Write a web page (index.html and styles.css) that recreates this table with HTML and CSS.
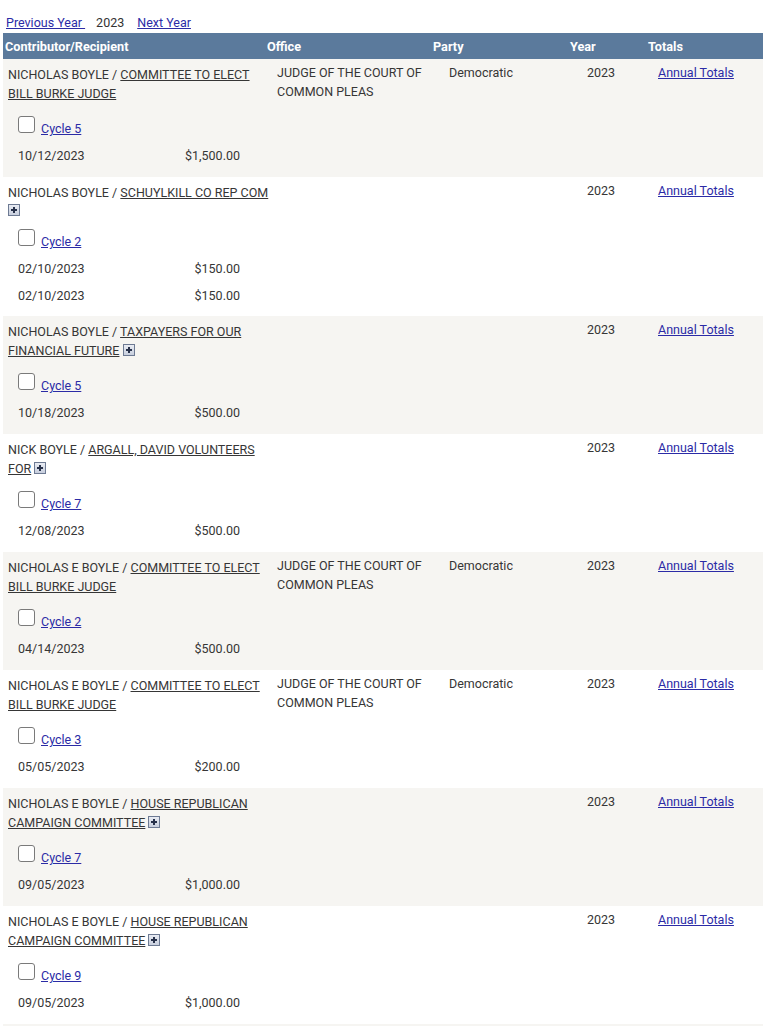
FILE: index.html
```html
<!DOCTYPE html>
<html>
<head>
<meta charset="utf-8">
<link rel="stylesheet" href="styles.css">
</head>
<body>
<div class="nav">
  <a href="#" class="nav-link">Previous Year&nbsp;</a>
  <span class="nav-year">2023</span>
  <a href="#" class="nav-link">Next Year</a>
</div>
<table class="results">
  <colgroup>
    <col class="c-contrib"><col class="c-office"><col class="c-party"><col class="c-year"><col class="c-totals">
  </colgroup>
  <thead>
    <tr>
      <th>Contributor/Recipient</th>
      <th>Office</th>
      <th>Party</th>
      <th>Year</th>
      <th>Totals</th>
    </tr>
  </thead>
  <tbody>
    <tr class="alt">
      <td class="contrib">
        <div class="who">NICHOLAS BOYLE / <a href="#" class="recip">COMMITTEE TO ELECT BILL BURKE JUDGE</a></div>
        <div class="cycle"><input type="checkbox" class="chk"><a href="#" class="cyc">Cycle 5</a></div>
        <div class="gift"><span>10/12/2023</span><span>$1,500.00</span></div>
      </td>
      <td class="office">JUDGE OF THE COURT OF COMMON PLEAS</td>
      <td class="party">Democratic</td>
      <td class="year">2023</td>
      <td class="totals"><a href="#">Annual Totals</a></td>
    </tr>
    <tr>
      <td class="contrib">
        <div class="who">NICHOLAS BOYLE / <a href="#" class="recip">SCHUYLKILL CO REP COM</a></div>
        <div class="plus-line"><span class="plus"></span></div>
        <div class="cycle"><input type="checkbox" class="chk"><a href="#" class="cyc">Cycle 2</a></div>
        <div class="gift"><span>02/10/2023</span><span>$150.00</span></div>
        <div class="gift"><span>02/10/2023</span><span>$150.00</span></div>
      </td>
      <td class="office"></td>
      <td class="party"></td>
      <td class="year">2023</td>
      <td class="totals"><a href="#">Annual Totals</a></td>
    </tr>
    <tr class="alt">
      <td class="contrib">
        <div class="who">NICHOLAS BOYLE / <a href="#" class="recip">TAXPAYERS FOR OUR FINANCIAL FUTURE</a> <span class="plus"></span></div>
        <div class="cycle"><input type="checkbox" class="chk"><a href="#" class="cyc">Cycle 5</a></div>
        <div class="gift"><span>10/18/2023</span><span>$500.00</span></div>
      </td>
      <td class="office"></td>
      <td class="party"></td>
      <td class="year">2023</td>
      <td class="totals"><a href="#">Annual Totals</a></td>
    </tr>
    <tr>
      <td class="contrib">
        <div class="who">NICK BOYLE / <a href="#" class="recip">ARGALL, DAVID VOLUNTEERS FOR</a> <span class="plus"></span></div>
        <div class="cycle"><input type="checkbox" class="chk"><a href="#" class="cyc">Cycle 7</a></div>
        <div class="gift"><span>12/08/2023</span><span>$500.00</span></div>
      </td>
      <td class="office"></td>
      <td class="party"></td>
      <td class="year">2023</td>
      <td class="totals"><a href="#">Annual Totals</a></td>
    </tr>
    <tr class="alt">
      <td class="contrib">
        <div class="who">NICHOLAS E BOYLE / <a href="#" class="recip">COMMITTEE TO ELECT BILL BURKE JUDGE</a></div>
        <div class="cycle"><input type="checkbox" class="chk"><a href="#" class="cyc">Cycle 2</a></div>
        <div class="gift"><span>04/14/2023</span><span>$500.00</span></div>
      </td>
      <td class="office">JUDGE OF THE COURT OF COMMON PLEAS</td>
      <td class="party">Democratic</td>
      <td class="year">2023</td>
      <td class="totals"><a href="#">Annual Totals</a></td>
    </tr>
    <tr>
      <td class="contrib">
        <div class="who">NICHOLAS E BOYLE / <a href="#" class="recip">COMMITTEE TO ELECT BILL BURKE JUDGE</a></div>
        <div class="cycle"><input type="checkbox" class="chk"><a href="#" class="cyc">Cycle 3</a></div>
        <div class="gift"><span>05/05/2023</span><span>$200.00</span></div>
      </td>
      <td class="office">JUDGE OF THE COURT OF COMMON PLEAS</td>
      <td class="party">Democratic</td>
      <td class="year">2023</td>
      <td class="totals"><a href="#">Annual Totals</a></td>
    </tr>
    <tr class="alt">
      <td class="contrib">
        <div class="who">NICHOLAS E BOYLE / <a href="#" class="recip">HOUSE REPUBLICAN CAMPAIGN COMMITTEE</a> <span class="plus"></span></div>
        <div class="cycle"><input type="checkbox" class="chk"><a href="#" class="cyc">Cycle 7</a></div>
        <div class="gift"><span>09/05/2023</span><span>$1,000.00</span></div>
      </td>
      <td class="office"></td>
      <td class="party"></td>
      <td class="year">2023</td>
      <td class="totals"><a href="#">Annual Totals</a></td>
    </tr>
    <tr>
      <td class="contrib">
        <div class="who">NICHOLAS E BOYLE / <a href="#" class="recip">HOUSE REPUBLICAN CAMPAIGN COMMITTEE</a> <span class="plus"></span></div>
        <div class="cycle"><input type="checkbox" class="chk"><a href="#" class="cyc">Cycle 9</a></div>
        <div class="gift"><span>09/05/2023</span><span>$1,000.00</span></div>
      </td>
      <td class="office"></td>
      <td class="party"></td>
      <td class="year">2023</td>
      <td class="totals"><a href="#">Annual Totals</a></td>
    </tr>
    <tr class="alt">
      <td class="contrib">
        <div class="who">NICHOLAS E BOYLE / <a href="#" class="recip">HOUSE REPUBLICAN CAMPAIGN COMMITTEE</a></div>
      </td>
      <td class="office"></td>
      <td class="party"></td>
      <td class="year">2023</td>
      <td class="totals"><a href="#">Annual Totals</a></td>
    </tr>
  </tbody>
</table>
</body>
</html>
```
FILE: styles.css
```css
html, body {
  margin: 0;
  padding: 0;
  background: #ffffff;
}
body {
  font-family: Roboto, "Liberation Sans", Arial, sans-serif;
  font-size: 12.5px;
  color: #363636;
  padding: 0 5px 0 3px;
}
.nav {
  height: 33px;
  display: flex;
  align-items: center;
  padding: 13px 0 0 3px;
  box-sizing: border-box;
  line-height: 16px;
}
.nav-link {
  color: #2b2ba6;
  text-decoration: underline;
}
.nav-year {
  color: #333;
  margin: 0 13px 0 11px;
}
.results {
  width: 760px;
  table-layout: fixed;
  border-collapse: collapse;
  border-spacing: 0;
}
.c-contrib { width: 262px; }
.c-office { width: 166px; }
.c-party { width: 137px; }
.c-year { width: 78px; }
.c-totals { width: 117px; }
.results th {
  background: #5b7a9c;
  color: #ffffff;
  font-weight: 700;
  text-align: left;
  height: 26px;
  padding: 0 0 0 2px;
  font-size: 12.7px;
}
.results td {
  vertical-align: top;
  padding: 4px 0 8px 0;
  line-height: 19px;
}
.results tr.alt td {
  background: #f6f5f2;
}
td.contrib {
  padding-left: 5px;
  padding-top: 6px;
}
td.office { padding-left: 12px; padding-right: 2px; }
td.party { padding-left: 18px; }
td.year { padding-left: 19px; }
td.totals { padding-left: 12px; }
.totals a {
  color: #2b2ba6;
  text-decoration: underline;
}
.who {
  line-height: 19px;
  margin-right: -9px;
}
.recip {
  color: #363636;
  text-decoration: underline;
}
.plus {
  display: inline-block;
  width: 12px;
  height: 12px;
  box-sizing: border-box;
  border: 1px solid #6d7a93;
  background: linear-gradient(#e9ecf3, #c7cedd);
  position: relative;
  vertical-align: -1px;
}
.plus::before, .plus::after {
  content: "";
  position: absolute;
  background: #27314a;
}
.plus::before {
  left: 2px;
  right: 2px;
  top: 4px;
  height: 2px;
}
.plus::after {
  top: 2px;
  bottom: 2px;
  left: 4px;
  width: 2px;
}
.plus-line {
  height: 14px;
  line-height: 14px;
}
.plus-line .plus {
  vertical-align: middle;
}
.cycle {
  display: flex;
  align-items: center;
  gap: 6px;
  margin-top: 12px;
  padding-left: 10px;
  height: 27px;
}
.chk {
  appearance: none;
  -webkit-appearance: none;
  margin: 0;
  width: 17px;
  height: 17px;
  border: 1px solid #7a7a7a;
  border-radius: 3px;
  background: #fff;
  position: relative;
  top: -4px;
}
.cyc {
  color: #2b2ba6;
  text-decoration: underline;
}
.gift {
  display: flex;
  justify-content: space-between;
  width: 222px;
  margin-left: 10px;
  height: 27px;
  align-items: center;
}
.gift + .gift {
  height: 26px;
}
```
